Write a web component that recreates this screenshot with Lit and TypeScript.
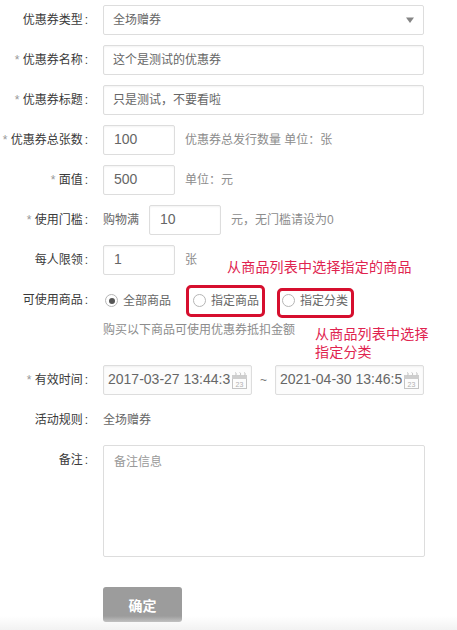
import { LitElement, html, css, svg } from "lit";
import { customElement } from "lit/decorators.js";

const calendar = html`<svg class="cal" width="15" height="17" viewBox="0 0 15 17" aria-hidden="true">
  <rect x="0.5" y="6.5" width="14" height="10" fill="#fcfcfc" stroke="#c4c4c4"/>
  <rect x="0" y="3" width="15" height="4" fill="#cecece"/>
  <path d="M3 0.5c1.6 0 1.6 3 0 3M7.500 0.500c1.600 0 1.600 3 0 3M12 0.500c1.600 0 1.600 3 0 3" fill="none" stroke="#c8c8c8"/>
  <text x="7.500" y="14.500" text-anchor="middle" font-size="7" fill="#b0b0b0" font-family="Liberation Sans, sans-serif">23</text>
</svg>`;

const caret = svg`<svg width="8" height="6" viewBox="0 0 8 6" aria-hidden="true"><path d="M0 0.500H8L4 6Z" fill="#858585"/></svg>`;

const colon = html`<span class="colon">:</span>`;

@customElement("app-root")
export class AppRoot extends LitElement {
  static styles = css`
    :host {
      display: block;
      position: relative;
      width: 457px;
      height: 630px;
      overflow: hidden;
      background: #fff;
      color: #333;
      font: 12px/1.4 "Liberation Sans", "Noto Sans CJK SC", sans-serif;
    }
    :host::after {
      content: "";
      position: absolute;
      left: 0;
      right: 0;
      bottom: 0;
      height: 14px;
      background: linear-gradient(#fff0, #f2f2f2);
      pointer-events: none;
    }
    .form {
      display: flex;
      flex-direction: column;
      gap: 10px;
      padding-top: 5px;
    }
    .row {
      display: flex;
      align-items: center;
      min-height: 30px;
    }
    .row.top { align-items: flex-start; }
    .label {
      flex: none;
      width: 88px;
      margin-right: 15px;
      text-align: right;
      white-space: nowrap;
      color: #3a3a3a;
    }
    .colon { margin-left: 2px; }
    .star { color: #999; }
    .field {
      box-sizing: border-box;
      height: 30px;
      display: flex;
      align-items: center;
      border: 1px solid #ddd;
      border-radius: 2px;
      background: #fff;
      box-shadow: inset 0 1px 2px #0000000d;
      color: #666;
      padding: 0 9px;
      white-space: nowrap;
    }
    .wide { width: 321px; }
    .select {
      justify-content: space-between;
      box-shadow: none;
    }
    .num {
      width: 72px;
      font-size: 14px;
      padding-left: 10px;
    }
    .help { color: #8c8c8c; margin-left: 10px; white-space: nowrap; }
    .plain { color: #666; }
    .threshold .num { margin-left: 10px; }
    .radios { display: flex; align-items: center; position: relative; margin-top: 2px; }
    .option {
      display: flex;
      align-items: center;
      gap: 5px;
      position: relative;
      color: #666;
      white-space: nowrap;
    }
    .o1 { margin-left: 2px; }
    .o2 { margin-left: 22px; }
    .o3 { margin-left: 23px; }
    .dot {
      box-sizing: border-box;
      width: 13px;
      height: 13px;
      border: 1px solid #b5b5b5;
      border-radius: 50%;
      background: #fff;
      position: relative;
    }
    .dot.on::after {
      content: "";
      position: absolute;
      inset: 2.500px;
      border-radius: 50%;
      background: #555;
    }
    .mark {
      position: absolute;
      box-sizing: border-box;
      border: 3px solid #d60f2e;
      border-radius: 5px;
      pointer-events: none;
    }
    .o2 .mark { left: -7px; top: -8px; width: 79px; height: 32px; }
    .o3 .mark { left: -5px; top: -5px; width: 77px; height: 30px; }
    .tip-row { min-height: 20px; margin: -3px 0 13px; color: #8c8c8c; padding-left: 103px; }
    .date {
      width: 149px;
      background: #fcfcfc;
      font-size: 14px;
      padding: 0 4px;
      justify-content: space-between;
    }
    .date span { overflow: hidden; }
    .cal { flex: none; margin-top: 1px; }
    .tilde { width: 23px; text-align: center; color: #777; }
    .area {
      box-sizing: border-box;
      width: 322px;
      height: 112px;
      border: 1px solid #ddd;
      border-radius: 2px;
      padding: 8px 10px;
      color: #999;
    }
    .label.lift { padding-top: 7px; }
    .submit {
      box-sizing: border-box;
      width: 79px;
      height: 35px;
      margin: 20px 0 0 103px;
      border: 0;
      border-radius: 3px;
      background: #9c9c9c;
      color: #fff;
      font: bold 14px "Liberation Sans", "Noto Sans CJK SC", sans-serif;
    }
    .note {
      position: absolute;
      color: #e0234f;
      font-size: 14px;
      line-height: 18px;
      letter-spacing: 0.2px;
      white-space: nowrap;
    }
    .n1 { left: 227px; top: 258px; }
    .n2 { left: 315px; top: 325px; }
  `;

  render() {
    return html`
      <div class="form">
        <div class="row">
          <div class="label">优惠券类型${colon}</div>
          <div class="field wide select"><span>全场赠券</span>${caret}</div>
        </div>
        <div class="row">
          <div class="label"><span class="star">* </span>优惠券名称${colon}</div>
          <div class="field wide">这个是测试的优惠券</div>
        </div>
        <div class="row">
          <div class="label"><span class="star">* </span>优惠券标题${colon}</div>
          <div class="field wide">只是测试，不要看啦</div>
        </div>
        <div class="row">
          <div class="label"><span class="star">* </span>优惠券总张数${colon}</div>
          <div class="field num">100</div>
          <div class="help">优惠券总发行数量 单位：张</div>
        </div>
        <div class="row">
          <div class="label"><span class="star">* </span>面值${colon}</div>
          <div class="field num">500</div>
          <div class="help">单位：元</div>
        </div>
        <div class="row threshold">
          <div class="label"><span class="star">* </span>使用门槛${colon}</div>
          <div class="plain">购物满</div>
          <div class="field num">10</div>
          <div class="help">元，无门槛请设为0</div>
        </div>
        <div class="row">
          <div class="label">每人限领${colon}</div>
          <div class="field num">1</div>
          <div class="help">张</div>
        </div>
        <div class="row">
          <div class="label">可使用商品${colon}</div>
          <div class="radios">
            <div class="option o1"><span class="dot on"></span>全部商品</div>
            <div class="option o2"><span class="dot"></span>指定商品<span class="mark"></span></div>
            <div class="option o3"><span class="dot"></span>指定分类<span class="mark"></span></div>
          </div>
        </div>
        <div class="tip-row">购买以下商品可使用优惠券抵扣金额</div>
        <div class="row">
          <div class="label"><span class="star">* </span>有效时间${colon}</div>
          <div class="field date"><span>2017-03-27 13:44:3</span>${calendar}</div>
          <div class="tilde">~</div>
          <div class="field date"><span>2021-04-30 13:46:5</span>${calendar}</div>
        </div>
        <div class="row">
          <div class="label">活动规则${colon}</div>
          <div class="plain">全场赠券</div>
        </div>
        <div class="row top">
          <div class="label lift">备注${colon}</div>
          <div class="area">备注信息</div>
        </div>
        <button class="submit">确定</button>
      </div>
      <div class="note n1">从商品列表中选择指定的商品</div>
      <div class="note n2">从商品列表中选择<br />指定分类</div>
    `;
  }
}
